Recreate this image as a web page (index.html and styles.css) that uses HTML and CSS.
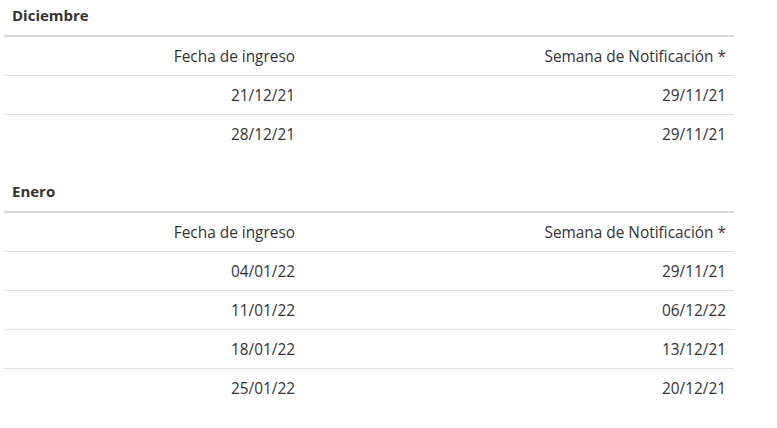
FILE: index.html
```html
<!DOCTYPE html>
<html lang="es">
<head>
<meta charset="utf-8">
<link rel="stylesheet" href="styles.css">
</head>
<body>
<section class="month">
  <h3 class="month-title">Diciembre</h3>
  <div class="table">
    <div class="row head"><div class="c1">Fecha de ingreso</div><div class="c2">Semana de Notificación *</div></div>
    <div class="row"><div class="c1">21/12/21</div><div class="c2">29/11/21</div></div>
    <div class="row"><div class="c1">28/12/21</div><div class="c2">29/11/21</div></div>
  </div>
</section>
<section class="month">
  <h3 class="month-title">Enero</h3>
  <div class="table">
    <div class="row head"><div class="c1">Fecha de ingreso</div><div class="c2">Semana de Notificación *</div></div>
    <div class="row"><div class="c1">04/01/22</div><div class="c2">29/11/21</div></div>
    <div class="row"><div class="c1">11/01/22</div><div class="c2">06/12/22</div></div>
    <div class="row"><div class="c1">18/01/22</div><div class="c2">13/12/21</div></div>
    <div class="row"><div class="c1">25/01/22</div><div class="c2">20/12/21</div></div>
  </div>
</section>
</body>
</html>
```
FILE: styles.css
```css
html, body {
  margin: 0;
  padding: 0;
  background: #fff;
}
body {
  font-family: "Open Sans", "Noto Sans", sans-serif;
  font-size: 15.4px;
  color: #333;
  padding: 0 0 0 4px;
  width: 730px;
}
.month {
  margin-bottom: 23px;
}
.month-title {
  margin: 0;
  padding: 5px 0 10px 8px;
  font-size: 15px;
  line-height: 20px;
  font-weight: 700;
  color: #333;
}
.table {
  border-top: 2px solid #dadada;
}
.row {
  display: grid;
  grid-template-columns: 299px 431px;
  height: 38px;
  align-items: center;
  border-bottom: 1px solid #e0e0e0;
}
.row:last-child {
  border-bottom: none;
}
.c1, .c2 {
  text-align: right;
  padding-right: 8px;
  line-height: 20px;
  padding-top: 1px;
}
```
